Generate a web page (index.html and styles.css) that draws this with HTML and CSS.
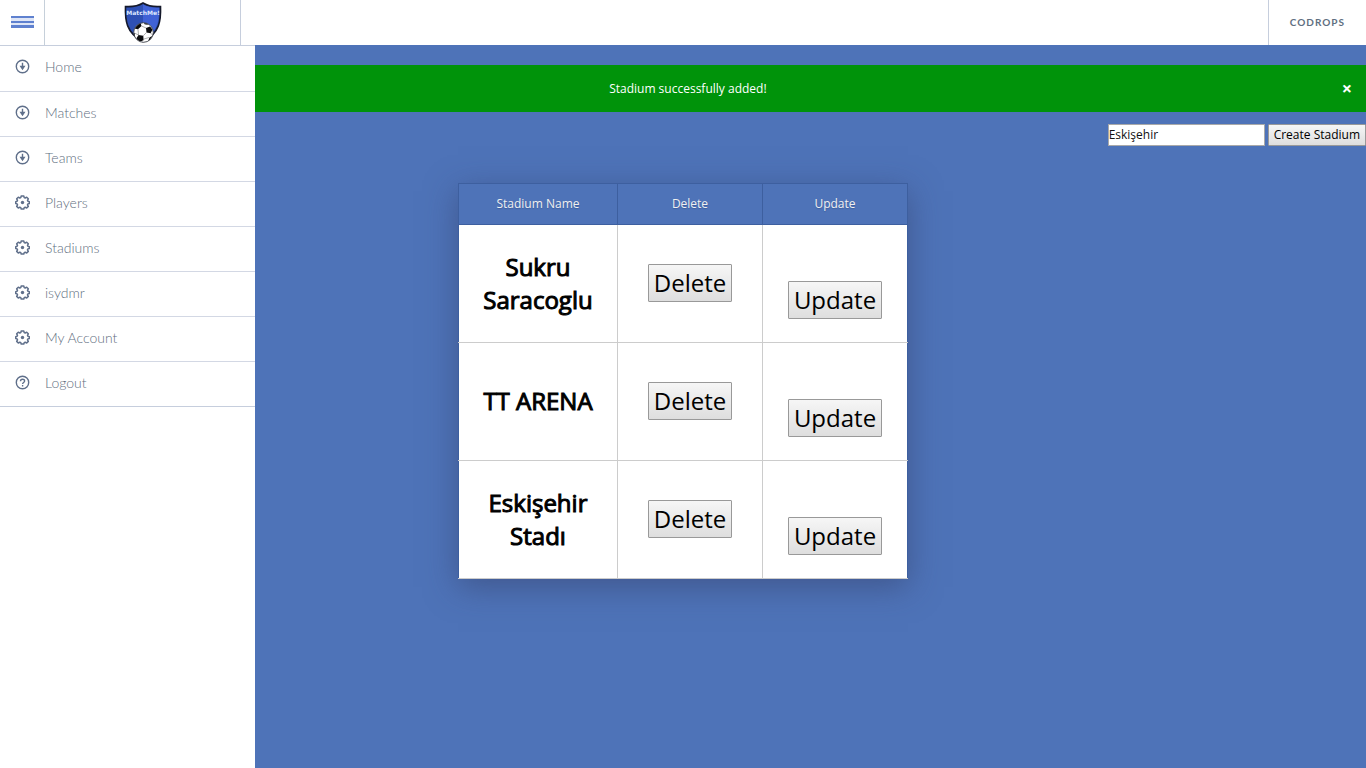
FILE: index.html
```html
<!DOCTYPE html>
<html lang="en">
<head>
<meta charset="utf-8">
<title>MatchMe! Stadiums</title>
<link rel="stylesheet" href="styles.css">
</head>
<body>
<svg width="0" height="0" class="defs" aria-hidden="true">
  <symbol id="down" viewBox="0 0 15 15">
    <circle cx="7.5" cy="7.5" r="6.2" fill="none" stroke="currentColor" stroke-width="1.4"/>
    <path d="M6.800 3.800h1.400v3h2.300L7.500 11.200 4.500 6.800h2.300z" fill="currentColor"/>
  </symbol>
  <symbol id="gear" viewBox="0 0 15 15">
    <path d="M6.200 1h2.600l.4 1.600 1 .4 1.500-.8 1.600 1.600-.8 1.500.4 1 1.500.4v1.800l-1.500.4-.4 1 .8 1.500-1.600 1.600-1.500-.8-1 .4L8.800 14H6.200l-.4-1.400-1-.4-1.500.8-1.600-1.600.8-1.500-.4-1L.7 8.500V6.700l1.400-.4.4-1-.8-1.500 1.600-1.600 1.500.8 1-.4z" fill="none" stroke="currentColor" stroke-width="1.5" stroke-linejoin="round"/>
    <circle cx="7.500" cy="7.500" r="1.700" fill="currentColor"/>
  </symbol>
  <symbol id="help" viewBox="0 0 15 15">
    <circle cx="7.5" cy="7.5" r="6.200" fill="none" stroke="currentColor" stroke-width="1.400"/>
    <path d="M5.500 6.200c0-2.700 4.100-2.600 4.100-.2 0 1.500-2 1.400-2 2.900M7.600 10v1.400" fill="none" stroke="currentColor" stroke-width="1.400"/>
  </symbol>
</svg>

<header class="topbar">
  <button class="menu-toggle" type="button" aria-label="Menu"><span class="bars"></span></button>
  <a class="brand" href="#" aria-label="MatchMe!">
    <svg class="logo" viewBox="0 0 38 42">
      <defs>
        <clipPath id="ball"><circle cx="19.500" cy="30.500" r="9.500"/></clipPath>
      </defs>
      <path d="M19 1C14 4 8 5 1.500 4.500 1 18 2 31 19 39.500 36 31 37 18 36.500 4.500 30 5 24 4 19 1z" fill="#2e50b4" stroke="#15192b" stroke-width="1.600"/>
      <path d="M19 2.500c5 2.700 10.500 3.600 16 3.200C35.400 18 34 30 19 38z" fill="#4062d6"/>
      <text class="logo-text" x="19" y="12.500" text-anchor="middle">MatchMe!</text>
      <circle cx="19.500" cy="30.500" r="9.800" fill="#fff" stroke="#3b3f4a" stroke-width=".9"/>
      <g clip-path="url(#ball)" fill="#0b0b0d">
        <path d="M11.500 23l5-2.200 1 3.200-3.500 3.200-4-.7zM22 26l4-1.500 2.500 3-1.800 3.800-4.200-.8zM14.500 33l4.800.7.300 4.500-4.100 1.600-3.200-3.400zM8.500 29l2.300 2.200.4 4L8 34zM25.500 35.500l3.500-2-1 5-4 1zM20 20.500l5 1-1.500 1.200-3-.5z"/>
        <path d="M14 27.200l.5 5.800M17.500 24l4.500 2M22.500 30.500l-3.200 3.200M26.700 31.300l2.500 2M20 37l5-1.500M10.800 31.200l3.700 1.800" fill="none" stroke="#777" stroke-width=".6"/>
      </g>
    </svg>
  </a>
  <a class="credit" href="#">Codrops</a>
</header>

<div class="layout">
  <main class="content">
    <div class="alert" role="status">
      <p class="alert-text">Stadium successfully added!</p>
      <button class="alert-close" type="button" aria-label="Close">×</button>
    </div>
    <form class="create">
      <input class="create-name" type="text" value="Eskişehir" aria-label="Stadium name">
      <button class="btn" type="button">Create Stadium</button>
    </form>
    <table class="stadiums">
      <thead>
        <tr><th class="col-name">Stadium Name</th><th class="col-action">Delete</th><th class="col-action">Update</th></tr>
      </thead>
      <tbody>
        <tr><td class="name">Sukru Saracoglu</td><td><button class="btn" type="button">Delete</button></td><td class="update"><button class="btn" type="button">Update</button></td></tr>
        <tr><td class="name">TT ARENA</td><td><button class="btn" type="button">Delete</button></td><td class="update"><button class="btn" type="button">Update</button></td></tr>
        <tr><td class="name">Eskişehir Stadı</td><td><button class="btn" type="button">Delete</button></td><td class="update"><button class="btn" type="button">Update</button></td></tr>
      </tbody>
    </table>
  </main>
  <nav class="sidebar">
    <ul class="menu">
      <li><a href="#"><svg class="icon"><use href="#down"/></svg>Home</a></li>
      <li><a href="#"><svg class="icon"><use href="#down"/></svg>Matches</a></li>
      <li><a href="#"><svg class="icon"><use href="#down"/></svg>Teams</a></li>
      <li><a href="#"><svg class="icon"><use href="#gear"/></svg>Players</a></li>
      <li><a href="#"><svg class="icon"><use href="#gear"/></svg>Stadiums</a></li>
      <li><a href="#"><svg class="icon"><use href="#gear"/></svg>isydmr</a></li>
      <li><a href="#"><svg class="icon"><use href="#gear"/></svg>My Account</a></li>
      <li><a href="#"><svg class="icon"><use href="#help"/></svg>Logout</a></li>
    </ul>
  </nav>
</div>
</body>
</html>
```
FILE: styles.css
```css
* { box-sizing: border-box; }

body {
  margin: 0;
  min-height: 100vh;
  display: flex;
  flex-direction: column;
  background: #4e73b8;
  font: 12px/16px "Open Sans", sans-serif;
}

a { text-decoration: none; }
.defs { position: absolute; }

.topbar {
  display: flex;
  height: 45px;
  background: #fff;
}

.menu-toggle {
  width: 45px;
  padding: 0 0 0 11px;
  border: 0;
  border-right: 1px solid #c6d0da;
  background: none;
}

.bars {
  display: block;
  width: 23px;
  height: 12px;
  margin-bottom: 1px;
  background: linear-gradient(#5f81cf 0 2px, #dfe6f6 2px 5px, #5f81cf 5px 7px, #dfe6f6 7px 9px, #5f81cf 9px);
}

.brand {
  display: flex;
  justify-content: center;
  width: 196px;
  padding-top: 2px;
  border-right: 1px solid #c6cedd;
}

.logo { width: 38px; height: 42px; }
.logo-text { font: bold 6px "DejaVu Sans", sans-serif; fill: #dfe8ff; }

.credit {
  margin-left: auto;
  padding: 0 21px;
  border-left: 1px solid #c6cedd;
  color: #5f6f81;
  font: bold 10px/45px Lato, sans-serif;
  letter-spacing: 1px;
  text-transform: uppercase;
}

.layout {
  flex: 1;
  display: grid;
  grid-template-columns: 255px 1fr;
}

.content { grid-area: 1 / 1 / 2 / 3; padding-top: 20px; }

.sidebar {
  grid-area: 1 / 1 / 2 / 2;
  z-index: 1;
  background: #fff;
}

.menu {
  margin: 0;
  padding: 0;
  list-style: none;
  border: solid #c6cedd;
  border-width: 1px 0;
}

.menu li { height: 45px; }
.menu li + li { border-top: 1px solid #d3d8e4; }

.menu a {
  display: flex;
  align-items: center;
  gap: 15px;
  height: 42px;
  padding-left: 15px;
  color: #5f6f81;
  font: 300 14px/42px Lato, sans-serif;
}

.icon { width: 15px; height: 15px; margin-bottom: 1px; color: #5f6f8a; }

.alert {
  display: flex;
  align-items: center;
  height: 47px;
  padding: 0 14px;
  background: #00930a;
  color: #fff;
}

.alert-text { flex: 1; margin: 0 0 0 20px; text-align: center; }

.alert-close {
  padding: 0 0 2px;
  border: 0;
  background: none;
  color: #fff;
  font: bold 18px/20px "Open Sans", sans-serif;
}

.create {
  display: flex;
  justify-content: flex-end;
  gap: 3px;
  padding-top: 12px;
  font-size: 12px;
}

.create-name {
  width: 157px;
  height: 22px;
  padding: 0 0 2px;
  border: 1px solid #a9a9a9;
  font: inherit;
  color: #111;
}

.btn {
  padding: 1px 5px 2px;
  border: 1px solid #999;
  border-radius: 1px;
  background: linear-gradient(#f6f6f6, #dedede);
  color: #000;
  font: inherit;
}

.create .btn { height: 22px; }

.stadiums {
  width: 450px;
  margin: 37px auto 0;
  border-collapse: collapse;
  table-layout: fixed;
  text-align: center;
  box-shadow: 0 8px 30px rgba(50, 60, 100, .5);
}

.stadiums th {
  height: 41px;
  padding: 0 0 1px;
  border: 1px solid #3d5f9f;
  background: #4e73b8;
  color: #f0f0f0;
  font-weight: normal;
  text-shadow: 0 1px 1px #3d5f9f;
}

.col-name { width: 159px; }
.col-action { width: 145px; }

.stadiums td {
  height: 118px;
  padding: 0 20px 2px;
  border: 1px solid #ccc;
  background: #fff;
  font-size: 24px;
  line-height: 33px;
}

.stadiums td:first-child { border-left-color: #3d5f9f; }
.stadiums td:last-child { border-right-color: #3d5f9f; }
.stadiums .name { -webkit-text-stroke: 1px #000; }
.stadiums .update { padding-top: 34px; }
```
